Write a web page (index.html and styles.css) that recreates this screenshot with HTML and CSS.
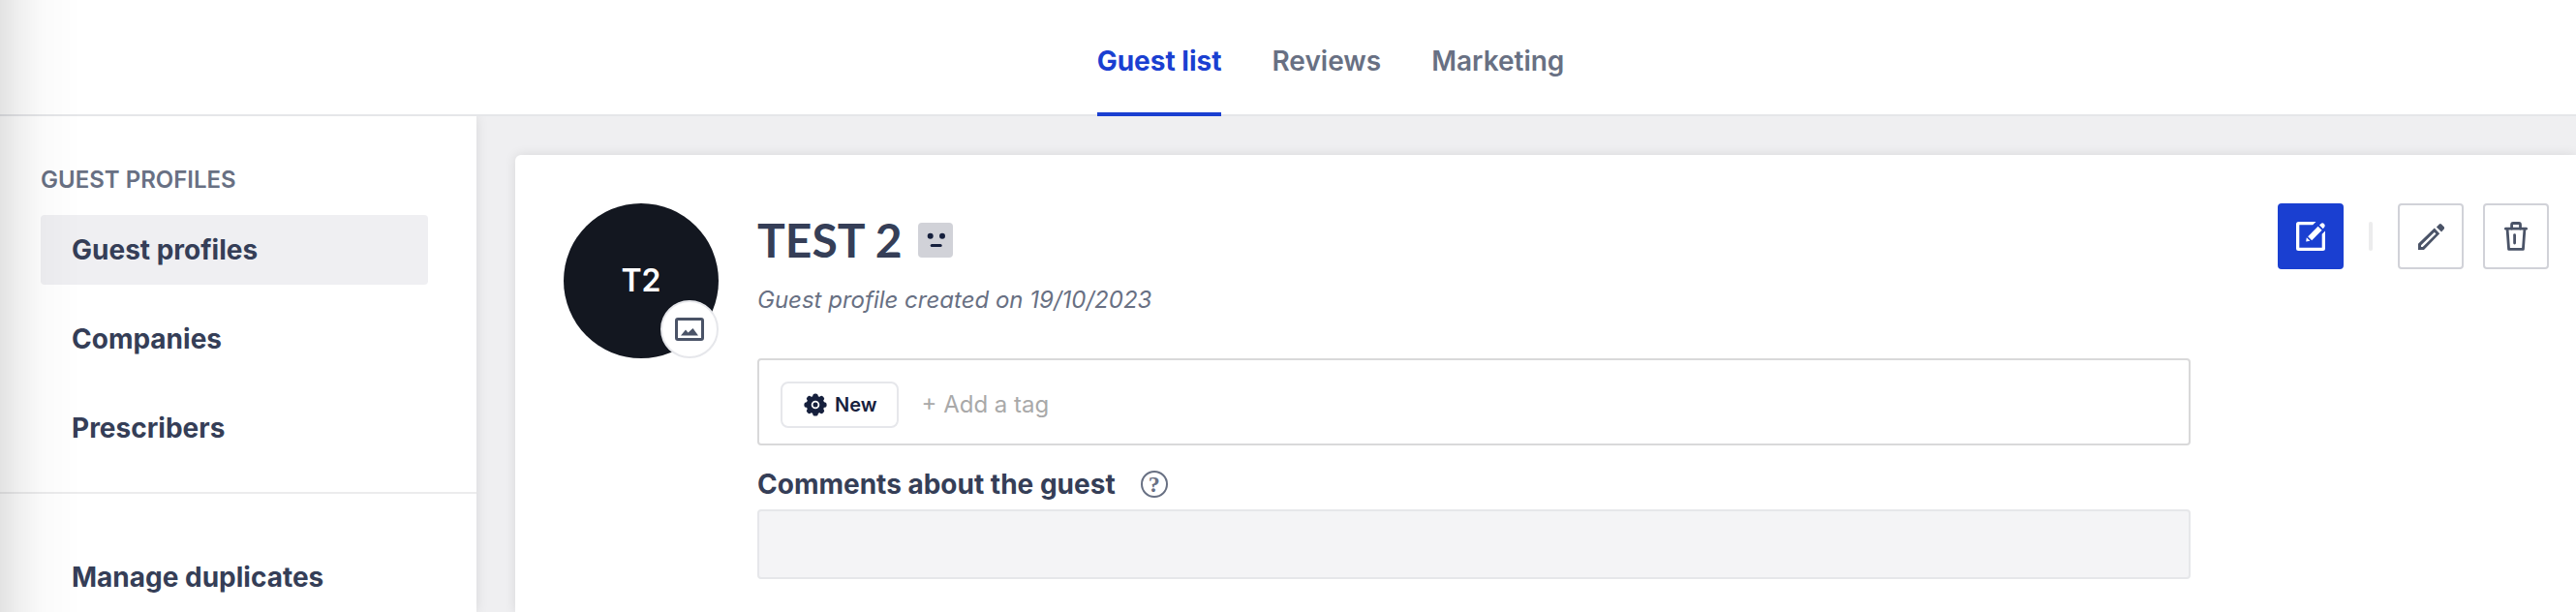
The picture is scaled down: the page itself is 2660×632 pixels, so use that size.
FILE: index.html
```
<!DOCTYPE html>
<html lang="en">

<head>
    <meta charset="UTF-8">
    <meta name="viewport" content="width=device-width, initial-scale=1.0">
    <title>Guest profile - TEST 2</title>
    <link rel="stylesheet" href="styles.css">
</head>

<body>
    <header class="topbar">
        <nav class="tabs">
            <a href="#" class="tab active">Guest list</a>
            <a href="#" class="tab">Reviews</a>
            <a href="#" class="tab">Marketing</a>
        </nav>
    </header>

    <div class="layout">
        <aside class="sidebar">
            <h2 class="sidebar-title">Guest profiles</h2>
            <nav class="menu">
                <a href="#" class="menu-item active">Guest profiles</a>
                <a href="#" class="menu-item">Companies</a>
                <a href="#" class="menu-item">Prescribers</a>
            </nav>
            <hr class="divider">
            <nav class="menu">
                <a href="#" class="menu-item">Manage duplicates</a>
            </nav>
        </aside>

        <main class="content">
            <section class="card">
                <div class="avatar">
                    <span>T2</span>
                    <button type="button" class="avatar-edit" aria-label="Change picture">
                        <svg width="30" height="24" viewBox="0 0 30 24">
                            <rect x="1.5" y="1.5" width="27" height="21" rx="1.5" fill="none" stroke="currentColor" stroke-width="3"/>
                            <path d="M6 18.5 11 12.5 13.5 15.5 18.5 11 24 18.5Z" fill="currentColor"/>
                        </svg>
                    </button>
                </div>

                <div class="profile">
                    <div class="title-row">
                        <h1>TEST 2</h1>
                        <svg class="mood" width="36" height="36" viewBox="0 0 36 36">
                            <rect width="36" height="36" rx="4" fill="#d1d2d8"/>
                            <circle cx="12.7" cy="13.8" r="3" fill="#16203d"/>
                            <circle cx="25" cy="13.8" r="3" fill="#16203d"/>
                            <path d="M14.2 23.4h9" stroke="#16203d" stroke-width="3" stroke-linecap="round"/>
                        </svg>
                    </div>
                    <p class="created">Guest profile created on 19/10/2023</p>

                    <div class="tag-box">
                        <span class="tag">
                            <svg width="24" height="24" viewBox="-12 -12 24 24">
                                <g fill="#16203d">
                                    <circle r="9.3"/>
                                    <rect x="-2.8" y="-11.6" width="5.6" height="23.2" rx="2.6"/>
                                    <rect x="-2.8" y="-11.6" width="5.6" height="23.2" rx="2.6" transform="rotate(45)"/>
                                    <rect x="-2.8" y="-11.6" width="5.6" height="23.2" rx="2.6" transform="rotate(90)"/>
                                    <rect x="-2.8" y="-11.6" width="5.6" height="23.2" rx="2.6" transform="rotate(135)"/>
                                </g>
                                <circle r="3.4" fill="none" stroke="#fff" stroke-width="1.8"/>
                            </svg>
                            New
                        </span>
                        <input type="text" class="tag-input" placeholder="+ Add a tag" aria-label="Add a tag">
                    </div>

                    <div class="label-row">
                        <label for="comments">Comments about the guest</label>
                        <button type="button" class="help" aria-label="Help">?</button>
                    </div>
                    <textarea id="comments" class="comments"></textarea>
                </div>

                <div class="actions">
                    <button type="button" class="btn btn-primary" aria-label="New reservation">
                        <svg width="30" height="30" viewBox="0 0 30 30" fill="currentColor">
                            <path d="M20.5 0H2.5Q0 0 0 2.5V27.5Q0 30 2.5 30H27.5Q30 30 30 27.5V9.5L26.7 12.8V26.7H3.3V3.3H17.2Z"/>
                            <path d="M12.2 15.2 22.6 4.8 26.6 8.8 16.2 19.2Z"/>
                            <path d="M10.8 16.2 14.4 19.8 10.2 20.4Z"/>
                            <path d="M24 3.6 25.6 1.9Q27.2.6 28.8 2.1 30.4 3.8 29.2 5.4L27.8 7.3Z"/>
                        </svg>
                    </button>
                    <span class="separator"></span>
                    <button type="button" class="btn" aria-label="Edit">
                        <svg width="27" height="27" viewBox="0 0 27 27" fill="currentColor">
                            <path fill-rule="evenodd" d="M0 20.8 16.8 4.6 22.2 10.3 6 27H0ZM3 24.1H4.7L18.4 10.4 16.8 8.7 3 22.2Z"/>
                            <path d="M18.9 3.4 21.8.6Q22.9-.4 24 .6L26.7 3.3Q27.6 4.3 26.7 5.4L24.1 8.5Z"/>
                        </svg>
                    </button>
                    <button type="button" class="btn" aria-label="Delete">
                        <svg width="24" height="30" viewBox="0 0 24 30" fill="none" stroke="currentColor" stroke-width="2.8" stroke-linecap="round" stroke-linejoin="round">
                            <path d="M1.4 7.2H22.6"/>
                            <path d="M7.6 7V3Q7.6 1.5 9.1 1.5H15Q16.5 1.5 16.5 3V7"/>
                            <path d="M3.1 8 4.6 28.4H19.4L20.9 8"/>
                            <path d="M10.6 13.6V22"/>
                        </svg>
                    </button>
                </div>
            </section>
        </main>
    </div>
</body>

</html>
```

FILE: styles.css
```
* {
    margin: 0;
    padding: 0;
    box-sizing: border-box;
}

body {
    display: flex;
    flex-direction: column;
    min-height: 100vh;
    font-family: Inter, sans-serif;
    font-size: 28px;
    line-height: 32px;
    color: #353e57;
    background: #fff;
}

/* shadow of the main navigation on the left edge */
body::before {
    content: "";
    position: fixed;
    top: 0;
    bottom: 0;
    left: 0;
    width: 84px;
    background: linear-gradient(to right, rgba(0, 0, 0, 0.11), rgba(0, 0, 0, 0.06) 25%, rgba(0, 0, 0, 0.02) 52%, rgba(0, 0, 0, 0));
    pointer-events: none;
    z-index: 10;
}

a {
    color: inherit;
    text-decoration: none;
}

button {
    font: inherit;
    color: inherit;
    cursor: pointer;
}

svg {
    display: block;
    flex-shrink: 0;
}

/* Top bar */
.topbar {
    position: relative;
    z-index: 2;
    padding-left: 88px;
    background: #fff;
    border-bottom: 2px solid #e5e6e9;
}

.tabs {
    display: flex;
    justify-content: center;
    gap: 52px;
    margin-bottom: -2px;
}

.tab {
    padding: 47px 0 37px;
    border-bottom: 4px solid transparent;
    font-weight: 600;
    color: #687083;
}

.tab.active {
    font-weight: 700;
    color: #1a3fd1;
    border-color: #1a3fd1;
}

/* Layout */
.layout {
    display: flex;
    flex: 1;
}

.sidebar {
    position: relative;
    z-index: 1;
    width: 492px;
    flex-shrink: 0;
    padding-top: 50px;
    background: #fff;
    box-shadow: 0 0 12px rgba(0, 0, 0, 0.1);
}

.sidebar-title {
    margin: 0 42px 20px;
    font-size: 24px;
    font-weight: 600;
    text-transform: uppercase;
    color: #687083;
}

.menu {
    display: flex;
    flex-direction: column;
    gap: 20px;
    padding: 0 50px 0 42px;
}

.menu-item {
    padding: 20px 32px;
    border-radius: 4px;
    font-weight: 700;
}

.menu-item.active {
    background: #efeff2;
}

.divider {
    margin: 30px 0 50px;
    border: none;
    border-top: 2px solid #ececed;
}

.content {
    display: flex;
    flex: 1;
    padding: 40px 0 0 40px;
    background: #efeff1;
}

.card {
    display: flex;
    flex: 1;
    align-items: flex-start;
    padding: 50px 28px 34px 50px;
    background: #fff;
    border-radius: 6px 0 0 0;
    box-shadow: 0 0 12px rgba(0, 0, 0, 0.1);
}

/* Avatar */
.avatar {
    position: relative;
    display: flex;
    align-items: center;
    justify-content: center;
    flex-shrink: 0;
    width: 160px;
    height: 160px;
    margin-right: 40px;
    border-radius: 50%;
    background: #131720;
    color: #fff;
    font-size: 32px;
    font-weight: 600;
}

.avatar-edit {
    position: absolute;
    right: 0;
    bottom: 0;
    display: flex;
    align-items: center;
    justify-content: center;
    width: 60px;
    height: 60px;
    border: 2px solid #e6e7eb;
    border-radius: 50%;
    background: #fff;
    color: #4a5367;
}

/* Profile */
.profile {
    flex: 1;
    margin-right: 90px;
}

.title-row {
    display: flex;
    align-items: center;
    gap: 16px;
    height: 76px;
}

h1 {
    font-family: Lato, sans-serif;
    font-size: 48px;
    font-weight: 700;
    line-height: 56px;
}

.created {
    margin: 8px 0 44px;
    font-size: 24px;
    font-style: italic;
    color: #687083;
}

.tag-box {
    display: flex;
    align-items: center;
    gap: 24px;
    padding: 22px 22px 16px;
    border: 2px solid #d9d9da;
    border-radius: 4px;
}

.tag {
    display: flex;
    align-items: center;
    gap: 8px;
    height: 48px;
    padding: 0 20px 0 22px;
    border: 2px solid #e6e7eb;
    border-radius: 8px;
    font-size: 20px;
    font-weight: 600;
    color: #16203d;
}

.tag-input {
    flex: 1;
    height: 32px;
    border: none;
    outline: none;
    background: none;
    font: inherit;
    font-size: 24px;
    color: inherit;
}

.tag-input::placeholder {
    color: #a9a9a9;
}

.label-row {
    display: flex;
    align-items: center;
    gap: 26px;
    height: 40px;
    margin: 20px 0 6px;
    font-weight: 700;
}

.help {
    display: flex;
    align-items: center;
    justify-content: center;
    width: 28px;
    height: 28px;
    border: 2px solid #687083;
    border-radius: 50%;
    background: none;
    color: #687083;
    font-family: "Liberation Serif", serif;
    font-size: 24px;
    font-weight: 700;
    line-height: 24px;
}

.comments {
    display: block;
    width: 100%;
    height: 72px;
    padding: 18px;
    border: 2px solid #e6e7ea;
    border-radius: 4px;
    outline: none;
    background: #f4f4f6;
    font: inherit;
    color: inherit;
    resize: none;
}

/* Actions */
.actions {
    display: flex;
    align-items: center;
    gap: 20px;
}

.btn {
    display: flex;
    align-items: center;
    justify-content: center;
    width: 68px;
    height: 68px;
    border: 2px solid #d1d2d8;
    border-radius: 4px;
    background: #fff;
    color: #4a5367;
}

.btn-primary {
    border-color: #1a3fd1;
    background: #1a3fd1;
    color: #fff;
}

.separator {
    width: 4px;
    height: 30px;
    margin: 0 6px;
    border-radius: 2px;
    background: #ececed;
}
```
